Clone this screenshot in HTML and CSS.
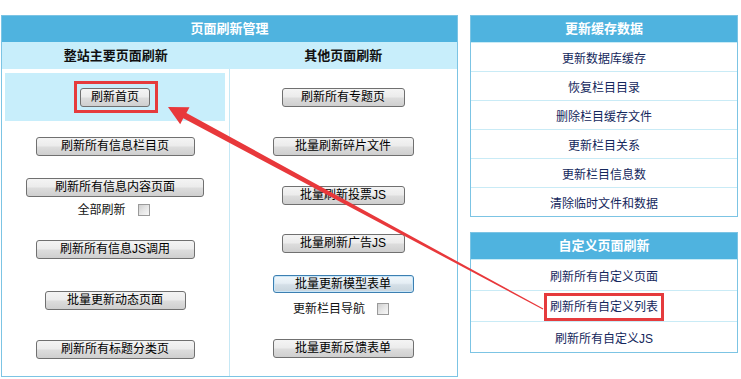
FILE: index.html
```html
<!DOCTYPE html>
<html lang="zh-CN">
<head>
<meta charset="utf-8">
<title>页面刷新管理</title>
<link rel="stylesheet" href="styles.css">
</head>
<body>
<div class="page">
  <section class="panel main">
    <div class="head">页面刷新管理</div>
    <div class="subhead">
      <div class="subcol">整站主要页面刷新</div>
      <div class="subcol">其他页面刷新</div>
    </div>
    <div class="body">
      <div class="col left">
        <div class="cell c48 hl"><span class="mark"><button class="btn w70">刷新首页</button></span></div>
        <div class="cell c50"><button class="btn w159">刷新所有信息栏目页</button></div>
        <div class="cell c52"><button class="btn w178">刷新所有信息内容页面</button>
          <label class="opt opt-l">全部刷新<input type="checkbox" class="cb"></label></div>
        <div class="cell c52"><button class="btn w159">刷新所有信息JS调用</button></div>
        <div class="cell c50"><button class="btn w141">批量更新动态页面</button></div>
        <div class="cell c49"><button class="btn w159">刷新所有标题分类页</button></div>
      </div>
      <div class="col right">
        <div class="cell c49"><button class="btn w123">刷新所有专题页</button></div>
        <div class="cell c49"><button class="btn w141">批量刷新碎片文件</button></div>
        <div class="cell c48"><button class="btn w123">批量刷新投票JS</button></div>
        <div class="cell c49"><button class="btn w123">批量刷新广告JS</button></div>
        <div class="cell c54"><button class="btn w141 focus">批量更新模型表单</button>
          <label class="opt opt-r">更新栏目导航<input type="checkbox" class="cb"></label></div>
        <div class="cell c52"><button class="btn w141">批量更新反馈表单</button></div>
      </div>
    </div>
  </section>

  <div class="side">
    <section class="panel list">
      <div class="head">更新缓存数据</div>
      <div class="row">更新数据库缓存</div>
      <div class="row">恢复栏目目录</div>
      <div class="row">删除栏目缓存文件</div>
      <div class="row">更新栏目关系</div>
      <div class="row">更新栏目信息数</div>
      <div class="row">清除临时文件和数据</div>
    </section>
    <section class="panel list tall">
      <div class="head">自定义页面刷新</div>
      <div class="row">刷新所有自定义页面</div>
      <div class="row"><span class="mark-text">刷新所有自定义列表</span></div>
      <div class="row">刷新所有自定义JS</div>
    </section>
  </div>
</div>

<svg class="arrow" width="741" height="379" viewBox="0 0 741 379" aria-hidden="true">
  <polygon points="168,107 189.5,107.2 186.4,112.9 543.3,308.6 542.8,309.5 183.3,118.3 180.2,124.2" fill="#e8383b"/>
</svg>
</body>
</html>
```

FILE: styles.css
```css
* { box-sizing: border-box; }

html, body {
  margin: 0;
  padding: 0;
  background: #ffffff;
}

body {
  width: 741px;
  height: 379px;
  position: relative;
  overflow: hidden;
  font-family: "Liberation Sans", "Noto Sans CJK SC", sans-serif;
  font-size: 12px;
  color: #000;
}

.page {
  display: flex;
  align-items: flex-start;
  gap: 12px;
  padding: 15px 0 0 1px;
}

.panel {
  border: 1px solid #7cc4e4;
  background: #fff;
}

.head {
  height: 26px;
  line-height: 26px;
  background: #4fb3df;
  color: #fff;
  font-weight: bold;
  font-size: 13px;
  text-align: center;
}

/* main panel */
.main {
  width: 457px;
  height: 362px;
}

.subhead {
  display: flex;
  height: 27px;
  background: #c8eefb;
}

.subcol {
  flex: 1;
  line-height: 27px;
  text-align: center;
  font-weight: bold;
  font-size: 13px;
  color: #111;
}

.body {
  display: flex;
  height: 307px;
}

.col {
  width: 227px;
  display: flex;
  flex-direction: column;
  padding: 4px 4px 0 3px;
}

.col.left {
  border-right: 1px solid #c6e8f5;
  width: 228px;
}

.cell {
  display: flex;
  flex-direction: column;
  align-items: center;
  justify-content: center;
}

.c48 { height: 48px; }
.c49 { height: 49px; }
.c50 { height: 50px; }
.c52 { height: 52px; }
.c54 { height: 54px; }

.hl { background: #c8eefb; }

.mark {
  display: inline-block;
  border: 3px solid #e53b3d;
  padding: 4px 5px 3px 3px;
  margin-left: 2px;
}

.btn {
  display: block;
  height: 19px;
  padding: 0;
  margin: 0;
  border: 1px solid #707070;
  border-radius: 3px;
  background: linear-gradient(#f4f4f4 0%, #ececec 45%, #dcdcdc 55%, #cfcfcf 100%);
  font-family: "Liberation Sans", "Noto Sans CJK SC", sans-serif;
  font-size: 12px;
  line-height: 17px;
  color: #000;
}

.btn.focus {
  border-color: #3c7fb1;
  box-shadow: inset 0 0 0 1px #c9e6f8;
  background: linear-gradient(#f1f7fb 0%, #e5eef4 45%, #d4dfe7 55%, #c8d4dd 100%);
  height: 18px;
  line-height: 16px;
}

.w70 { width: 70px; }
.w123 { width: 123px; }
.w141 { width: 141px; }
.w159 { width: 159px; }
.w178 { width: 178px; }

.opt {
  display: flex;
  align-items: center;
  gap: 12px;
  height: 13px;
  line-height: 13px;
  font-size: 12px;
  color: #111;
}

.opt-l { margin-top: 7px; margin-left: -3px; }
.opt-r { margin-top: 10px; margin-left: -4px; }

.cb {
  appearance: none;
  -webkit-appearance: none;
  width: 12px;
  height: 12px;
  margin: 0;
  border: 1px solid #9a9a9a;
  background: linear-gradient(135deg, #cfcfcf 0%, #e6e6e6 50%, #f7f7f7 100%);
}

/* side lists */
.side {
  display: flex;
  flex-direction: column;
  gap: 15px;
  width: 268px;
}

.list .row {
  height: 29px;
  display: flex;
  align-items: center;
  justify-content: center;
  color: #14275c;
  font-size: 12px;
  border-top: 1px solid #c9ebf6;
}

.list .row:first-of-type { border-top: 0; }

.list.tall .row { height: 31px; }

.mark-text {
  display: inline-block;
  line-height: 22px;
  padding: 0 3px 0 3px;
  outline: 3px solid #e53b3d;
  margin-top: 1px;
}

.arrow {
  position: absolute;
  left: 0;
  top: 0;
  pointer-events: none;
}
```
